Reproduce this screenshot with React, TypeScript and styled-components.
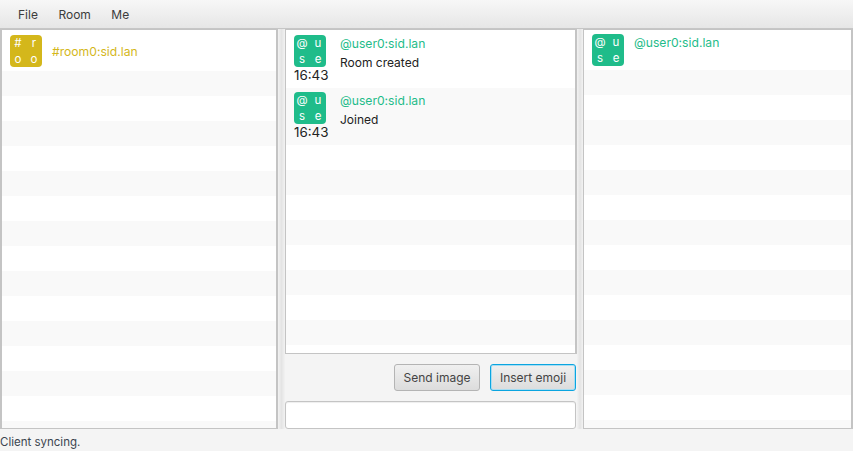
import React from "react";
import styled, { createGlobalStyle } from "styled-components";

const GlobalStyle = createGlobalStyle`
  html, body { margin: 0; padding: 0; height: 100%; overflow: hidden; }
  body { background: #f4f4f4; font-family: Inter, "Liberation Sans", sans-serif; font-size: 12px; color: #333; }
`;

const ROOM = "#d4b71b";
const USER = "#1fbc8a";

const Window = styled.div`
  width: 853px;
  height: 451px;
  display: flex;
  flex-direction: column;
`;

const MenuBar = styled.div`
  height: 29px;
  box-sizing: border-box;
  display: flex;
  align-items: center;
  padding-left: 8px;
  gap: 0.5px;
  background: linear-gradient(#f7f7f7, #e6e6e6);
  border-bottom: 1px solid #c6c6c6;
  flex: none;
`;

const MenuItem = styled.div`
  padding: 0 10px;
  color: #3c3c3c;
`;

const Panes = styled.div`
  height: 400px;
  display: flex;
  flex: none;
`;

const Divider = styled.div<{ $width: number }>`
  width: ${({ $width }) => $width}px;
  flex: none;
  background: linear-gradient(90deg, #f2f2f2, #e4e4e4 50%, #f2f2f2);
`;

const ListBox = styled.div<{ $width?: number; $inset?: boolean; $wideLeft?: boolean }>`
  box-sizing: border-box;
  flex: ${({ $width }) => ($width ? "none" : "1 1 0")};
  width: ${({ $width }) => ($width ? `${$width}px` : "auto")};
  border: 1px solid #c4c4c4;
  border-width: 1px 2px 1px ${({ $wideLeft }) => ($wideLeft ? 2 : 1)}px;
  padding-top: ${({ $inset }) => ($inset ? 1 : 0)}px;
  overflow: hidden;
  display: flex;
  flex-direction: column;
  background: #fff;
`;

const Row = styled.div<{ $odd?: boolean }>`
  background: ${({ $odd }) => ($odd ? "#f9f9f9" : "#fff")};
  flex: none;
`;

const Filler = styled(Row)`
  height: 25px;
`;

const EntryRow = styled(Row)`
  display: flex;
  height: 40px;
  padding: 4px 0 0 8px;
  box-sizing: border-box;
`;

const MessageRow = styled(Row)`
  display: flex;
  height: 57px;
  padding: 4px 0 0 8px;
  box-sizing: border-box;
`;

const AvatarCol = styled.div<{ $gap: number }>`
  width: 32px;
  margin-right: ${({ $gap }) => $gap}px;
  flex: none;
`;

const Avatar = styled.div<{ $color: string }>`
  width: 32px;
  height: 32px;
  border-radius: 4px;
  background: ${({ $color }) => $color};
  color: #fff;
  display: grid;
  grid-template-columns: 1fr 1fr;
  grid-template-rows: 1fr 1fr;
  font-size: 11.5px;
  line-height: 16px;
  text-align: center;
`;

const Time = styled.div`
  color: #222;
  font-size: 13.4px;
  line-height: 16px;
  white-space: nowrap;
`;

const Name = styled.div<{ $color: string; $centered?: boolean }>`
  color: ${({ $color }) => $color};
  font-size: 12.15px;
  line-height: 17px;
  margin-top: ${({ $centered }) => ($centered ? 8 : 0)}px;
`;

const Body = styled.div`
  color: #222;
  line-height: 17px;
  margin-top: 2px;
`;

const CenterPane = styled.div`
  width: 292px;
  flex: none;
  display: flex;
  flex-direction: column;
`;

const ActionBar = styled.div`
  height: 47px;
  flex: none;
  display: flex;
  align-items: center;
  justify-content: flex-end;
  gap: 10px;
  box-sizing: border-box;
  padding-right: 1px;
  background: #f4f4f4;
`;

const ActionButton = styled.button<{ $focused?: boolean }>`
  width: 86px;
  height: 27px;
  padding: 0;
  box-sizing: border-box;
  border-radius: 3px;
  font: inherit;
  color: #444;
  background: linear-gradient(#f0f0f0, #dcdcdc);
  border: 1px solid ${({ $focused }) => ($focused ? "#0ba5e0" : "#b4b4b4")};
  box-shadow: ${({ $focused }) => ($focused ? "inset 0 0 0 1px #a8ddf2" : "none")};
`;

const MessageInput = styled.div`
  height: 28px;
  width: 291px;
  flex: none;
  box-sizing: border-box;
  background: #fff;
  border: 1px solid #c4c4c4;
  border-radius: 3px;
  box-shadow: inset 0 1px 1px #eeeeee;
`;

const StatusBar = styled.div`
  flex: 1;
  color: #3c4550;
  font-size: 11.5px;
  line-height: 27px;
`;

const fillers = (count: number, startOdd: boolean) =>
  Array.from({ length: count }, (_, i) => (
    <Filler key={i} $odd={startOdd ? i % 2 === 0 : i % 2 === 1} />
  ));

const Letters = ({ text }: { text: string }) => (
  <>
    {text.split("").map((c, i) => (
      <span key={i}>{c}</span>
    ))}
  </>
);

export default function App() {
  return (
    <Window>
      <GlobalStyle />
      <MenuBar>
        <MenuItem>File</MenuItem>
        <MenuItem>Room</MenuItem>
        <MenuItem>Me</MenuItem>
      </MenuBar>
      <Panes>
        <ListBox $width={278} $inset $wideLeft>
          <EntryRow>
            <AvatarCol $gap={10}>
              <Avatar $color={ROOM}>
                <Letters text="#roo" />
              </Avatar>
            </AvatarCol>
            <Name $color={ROOM} $centered>
              #room0:sid.lan
            </Name>
          </EntryRow>
          {fillers(15, true)}
        </ListBox>
        <Divider $width={7} />
        <CenterPane>
          <ListBox $inset>
            <MessageRow>
              <AvatarCol $gap={14}>
                <Avatar $color={USER}>
                  <Letters text="@use" />
                </Avatar>
                <Time>16:43</Time>
              </AvatarCol>
              <div>
                <Name $color={USER}>@user0:sid.lan</Name>
                <Body>Room created</Body>
              </div>
            </MessageRow>
            <MessageRow $odd>
              <AvatarCol $gap={14}>
                <Avatar $color={USER}>
                  <Letters text="@use" />
                </Avatar>
                <Time>16:43</Time>
              </AvatarCol>
              <div>
                <Name $color={USER}>@user0:sid.lan</Name>
                <Body>Joined</Body>
              </div>
            </MessageRow>
            {fillers(9, false)}
          </ListBox>
          <ActionBar>
            <ActionButton>Send image</ActionButton>
            <ActionButton $focused>Insert emoji</ActionButton>
          </ActionBar>
          <MessageInput />
        </CenterPane>
        <Divider $width={6} />
        <ListBox $width={270}>
          <EntryRow>
            <AvatarCol $gap={10}>
              <Avatar $color={USER}>
                <Letters text="@use" />
              </Avatar>
            </AvatarCol>
            <Name $color={USER}>@user0:sid.lan</Name>
          </EntryRow>
          {fillers(15, true)}
        </ListBox>
      </Panes>
      <StatusBar>Client syncing.</StatusBar>
    </Window>
  );
}
